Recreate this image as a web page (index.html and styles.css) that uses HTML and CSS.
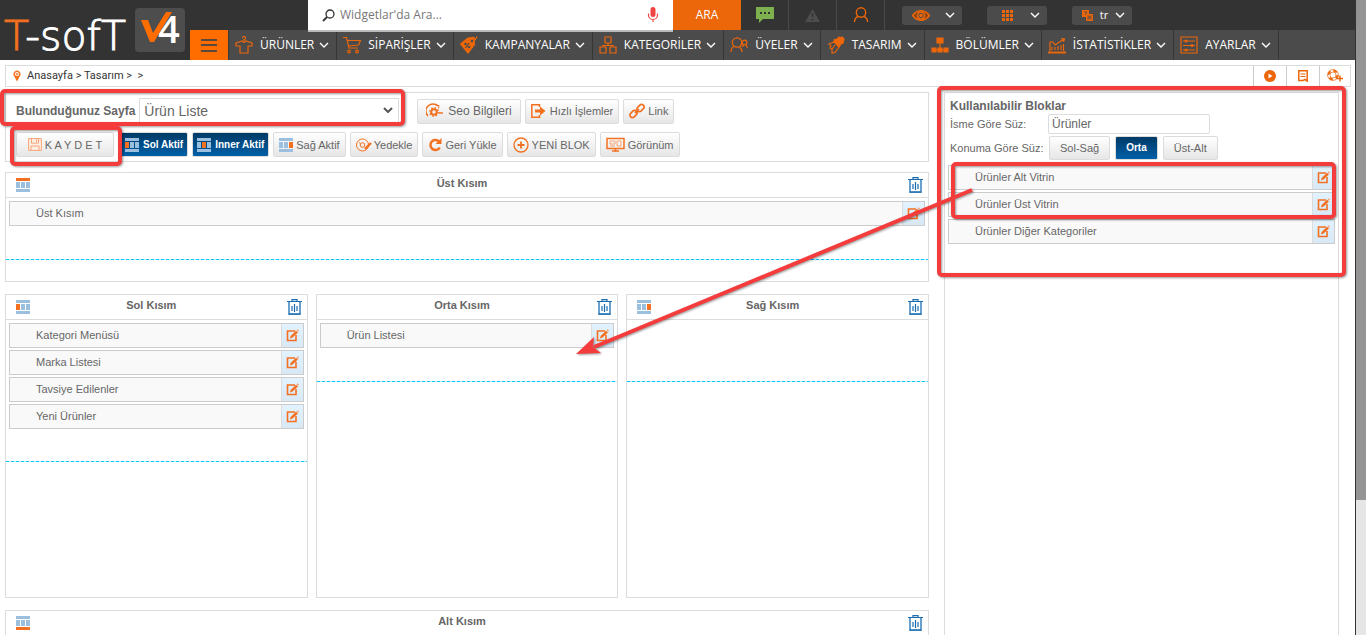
FILE: index.html
```html
<!DOCTYPE html>
<html lang="tr">
<head>
<meta charset="utf-8">
<title>T-Soft Tasarım</title>
<link rel="stylesheet" href="styles.css">
</head>
<body>
<svg class="defs" aria-hidden="true">
  <symbol id="chev" viewBox="0 0 10 6"><path d="M1 1l4 4 4-4" fill="none" stroke="currentColor" stroke-width="1.4"/></symbol>
  <symbol id="edit" viewBox="0 0 13 13"><path d="M9 2H1.500v9.500H10V6" fill="none" stroke="#f47021" stroke-width="1.600"/><path d="M4 9.500l.6-2.600L10 1.800l2 1.600-5.400 5.200z" fill="#f47021"/><path d="M11 .8l1.600 1.400" stroke="#f7a575" stroke-width="1.500"/></symbol>
  <symbol id="trash" viewBox="0 0 15 16"><path d="M0 2.500h15M5 2V.6h5V2" fill="none" stroke="#1a6cb0" stroke-width="1.200"/><path d="M2 3v12h11V3" fill="none" stroke="#4f90c6" stroke-width="1.700"/><path d="M1.500 15.200h12M5 7v5M7.500 5v8M10 7v5" stroke="#1a6cb0" stroke-width="1.200"/></symbol>
  <symbol id="top" viewBox="0 0 14 14"><path d="M0 0h14v3H0z" fill="#f47021"/><path d="M0 4h4v6H0zM5 4h4v6H5zM10 4h4v6h-4zM0 11h14v3H0z" fill="#9bc0df"/></symbol>
  <symbol id="bottom" viewBox="0 0 14 14"><path d="M0 0h14v3H0zM0 4h4v6H0zM5 4h4v6H5zM10 4h4v6h-4z" fill="#9bc0df"/><path d="M0 11h14v3H0z" fill="#f47021"/></symbol>
  <symbol id="left" viewBox="0 0 14 14"><path d="M0 0h14v3H0zM5 4h4v6H5zM10 4h4v6h-4zM0 11h14v3H0z" fill="#9bc0df"/><path d="M0 4h4v6H0z" fill="#f47021"/></symbol>
  <symbol id="mid" viewBox="0 0 14 14"><path d="M0 0h14v3H0zM0 4h4v6H0zM10 4h4v6h-4zM0 11h14v3H0z" fill="#9bc0df"/><path d="M5 4h4v6H5z" fill="#f47021"/></symbol>
  <symbol id="right" viewBox="0 0 14 14"><path d="M0 0h14v3H0zM0 4h4v6H0zM5 4h4v6H5zM0 11h14v3H0z" fill="#9bc0df"/><path d="M10 4h4v6h-4z" fill="#f47021"/></symbol>
</svg>
<div class="page">
  <header class="header">
    <a class="brand" href="#" aria-label="T-Soft V4">
      <svg width="190" height="60" viewBox="0 0 190 60">
        <text x="4" y="50" class="logo-text"><tspan class="logo-accent">T</tspan>-sofT</text>
        <rect x="135" y="8" width="50" height="44" rx="4" fill="#4d4d4d"/>
        <text x="158" y="43" class="logo-four">4</text>
        <path d="M141 20h7l5 13 13-21h6l-18 30h-4z" fill="#ff6c00"/>
      </svg>
    </a>
    <div class="topbar">
      <form class="search">
        <svg width="13" height="13" viewBox="0 0 13 13"><circle cx="8" cy="5" r="4" fill="none" stroke="#333" stroke-width="1.300"/><path d="M5 8l-4 4" stroke="#333" stroke-width="1.800"/></svg>
        <input class="search-input" type="text" placeholder="Widgetlar'da Ara..." aria-label="Widgetlar'da Ara">
        <svg width="12" height="16" viewBox="0 0 12 16"><rect x="3.500" y="0" width="5" height="10" rx="2.500" fill="#f04444"/><path d="M1.500 6.500v1.500a4.500 4.500 0 0 0 9 0V6.500M6 12v3" fill="none" stroke="#f04444" stroke-width="1.200"/></svg>
      </form>
      <button class="ara" type="button">ARA</button>
      <a class="tile" href="#" aria-label="Mesajlar"><svg width="18" height="16" viewBox="0 0 18 16"><path d="M0 0h18v12H7l-4 4v-4H0z" fill="#7fb04f"/><path d="M4 5h2v2H4zM8 5h2v2H8zM12 5h2v2h-2z" fill="#333"/></svg></a>
      <a class="tile" href="#" aria-label="Uyarılar"><svg width="15" height="13" viewBox="0 0 15 13"><path d="M7.500 0L15 13H0z" fill="#4d4d4d"/><path d="M7.500 4v4M7.500 10v1.500" stroke="#333" stroke-width="1.500"/></svg></a>
      <a class="tile" href="#" aria-label="Hesap"><svg width="16" height="16" viewBox="0 0 16 16" fill="none" stroke="#ec660a" stroke-width="1.400"><circle cx="8" cy="5.500" r="4.700"/><path d="M1.500 15c0-3 1.500-5 4-5.700M14.500 15c0-3-1.500-5-4-5.700"/></svg></a>
      <div class="quick">
        <button class="pill" type="button" aria-label="Görünüm seç"><svg width="18" height="11" viewBox="0 0 18 11"><path d="M.7 5.500C5-.8 13-.8 17.300 5.500 13 11.800 5 11.800.7 5.500z" fill="#8a430f" stroke="#ec660a" stroke-width="1.600"/><circle cx="9" cy="5.500" r="4.300" fill="#ec660a"/><circle cx="9" cy="5.500" r="2.300" fill="none" stroke="#4b4b4b"/></svg><svg width="10" height="6"><use href="#chev"/></svg></button>
        <button class="pill" type="button" aria-label="Uygulamalar"><svg width="11" height="11" viewBox="0 0 11 11"><path d="M0 0h3v3H0zM4 0h3v3H4zM8 0h3v3H8zM0 4h3v3H0zM4 4h3v3H4zM8 4h3v3H8zM0 8h3v3H0zM4 8h3v3H4zM8 8h3v3H8z" fill="#ec660a"/></svg><svg width="10" height="6"><use href="#chev"/></svg></button>
        <button class="pill pill-lang" type="button"><svg width="11" height="11" viewBox="0 0 11 11"><path d="M0 0h7v7H0z" fill="#ec660a"/><path d="M4.500 4.500h6v6h-6z" fill="#c35d1a" stroke="#ec660a"/><path d="M2 2h3L3 5M6 9l1.500-3L9 9" fill="none" stroke="#4b4b4b" stroke-width=".8"/></svg>tr<svg width="10" height="6"><use href="#chev"/></svg></button>
      </div>
    </div>
    <nav class="nav">
      <button class="burger" type="button" aria-label="Menü"><svg width="16" height="13" viewBox="0 0 16 13"><path d="M0 1h16M0 6h16M0 12h16" stroke="#5a4a3c" stroke-width="2"/></svg></button>
      <a class="nav-item" href="#"><svg class="ni" viewBox="0 0 18 18"><path d="M9 5V3.500a1.500 1.500 0 1 0-1.500-1.500M7 5L1 7v3h4v7h8v-7h4V7l-6-2-2 1.500z"/></svg>ÜRÜNLER<svg class="nc"><use href="#chev"/></svg></a>
      <a class="nav-item" href="#"><svg class="ni" viewBox="0 0 18 18"><path d="M0 1.500h3.500L6 12h9M4.500 4.500h13L15.500 9 5.500 10"/><circle cx="6" cy="15.500" r="1.300"/><circle cx="14" cy="15.500" r="1.300"/></svg>SİPARİŞLER<svg class="nc"><use href="#chev"/></svg></a>
      <a class="nav-item" href="#"><svg class="ni" viewBox="0 0 18 18"><path class="solid" d="M.5 8L8 2l6-.5.500 7L8 17z"/><path d="M12 5c2 0 4-2 5-4.500"/><circle class="cut" cx="12" cy="5" r=".7"/><path class="cut" d="M5.500 12L9 7"/><circle class="cut" cx="5.500" cy="8" r=".6"/><circle class="cut" cx="9" cy="11" r=".6"/></svg>KAMPANYALAR<svg class="nc"><use href="#chev"/></svg></a>
      <a class="nav-item" href="#"><svg class="ni" viewBox="0 0 18 18"><path d="M6 1h6v6H6zM1 11h6v6H1zM11 11h6v6h-6zM9 7v2.500M4 11V9.500h10V11"/></svg>KATEGORİLER<svg class="nc"><use href="#chev"/></svg></a>
      <a class="nav-item" href="#"><svg class="ni" viewBox="0 0 18 18"><circle cx="7" cy="6.500" r="4.700"/><path d="M1 16c0-3 1-5 3.500-6M12 16c0-3-1-4-2.500-5.500"/><circle cx="14.500" cy="6.500" r="2.300"/><path d="M12.500 11l1-2.200M17.500 12l-1.500-3.300"/></svg>ÜYELER<svg class="nc"><use href="#chev"/></svg></a>
      <a class="nav-item" href="#"><svg class="ni" viewBox="0 0 18 18"><path class="solid" d="M7 6l5 5 2-3 2-1 1-4-2-2-2 1-1-1-2 2-3 1z"/><path d="M7 6L2 8l2 2-1 2 2 1v4l3-.500L12 11M5 13l3-4"/></svg>TASARIM<svg class="nc"><use href="#chev"/></svg></a>
      <a class="nav-item" href="#"><svg class="ni" viewBox="0 0 18 18"><path class="solid" d="M6 2h6v5H6zM1 12h4v4H1zM7 12h4v4H7zM13 12h4v4h-4zM9 7v5M3 14h12"/></svg>BÖLÜMLER<svg class="nc"><use href="#chev"/></svg></a>
      <a class="nav-item" href="#"><svg class="ni" viewBox="0 0 18 18"><path d="M2 15V6h3l2 3 3-2 6-4M13 2.500l3.500.5-1 3M15.500 8v7M4 14v-3M7 14v-3M10 14v-4M13 14V9"/><path d="M0 16h18M0 17h18"/></svg>İSTATİSTİKLER<svg class="nc"><use href="#chev"/></svg></a>
      <a class="nav-item" href="#"><svg class="ni" viewBox="0 0 18 18"><path d="M1 1h16v16H1zM3 5h12M3 9.500h12M3 14h12"/><circle cx="6" cy="5" r="1"/><circle cx="12" cy="9.500" r="1"/><circle cx="6" cy="14" r="1"/></svg>AYARLAR<svg class="nc"><use href="#chev"/></svg></a>
    </nav>
  </header>

  <div class="crumbs">
    <svg width="8" height="12" viewBox="0 0 8 12"><path d="M4 11.500L1 6a3.500 3.500 0 1 1 6 0z" fill="#f47021"/><circle cx="4" cy="4" r="2" fill="#fff"/><circle cx="4" cy="4" r="1" fill="#f47021"/></svg>
    <div class="crumb-path"><a href="#">Anasayfa</a> &gt; <a href="#">Tasarım</a> &gt; &nbsp;&gt;</div>
    <button class="crumb-btn" type="button" aria-label="Oynat"><svg width="12" height="12" viewBox="0 0 12 12"><circle cx="6" cy="6" r="6" fill="#ec660a"/><path d="M4.500 3.500L8.500 6l-4 2.500z" fill="#fff"/></svg></button>
    <button class="crumb-btn" type="button" aria-label="Notlar"><svg width="10" height="12" viewBox="0 0 10 12"><path d="M.8.8h8.400v10.400L7 9.500l-2 1H.8z" fill="none" stroke="#ec660a" stroke-width="1.500"/><path d="M2.500 4h5M2.500 6.500h5" stroke="#ec660a"/></svg></button>
    <button class="crumb-btn" type="button" aria-label="Destek"><svg width="16" height="14" viewBox="0 0 16 14"><circle cx="6" cy="6" r="4.500" fill="none" stroke="#ec660a" stroke-width="2" stroke-dasharray="4 3"/><circle cx="6" cy="6" r="5.400" fill="none" stroke="#ec660a" stroke-width=".7"/><circle cx="6" cy="6" r="3" fill="none" stroke="#ec660a" stroke-width=".7"/><path d="M13 6.500v6M10 9.500h6" stroke="#ec660a" stroke-width="1.400"/></svg></button>
  </div>

  <div class="workspace">
    <main class="main">
      <section class="toolbar">
        <div class="tool-row">
          <label class="page-label" for="sayfa">Bulunduğunuz Sayfa</label>
          <div class="select-wrap">
            <select class="page-select" id="sayfa"><option>Ürün Liste</option></select>
            <svg class="select-arrow" viewBox="0 0 10 6"><path d="M1 1l4 4 4-4" fill="none" stroke="#555" stroke-width="2"/></svg>
          </div>
          <button class="btn btn-seo" type="button"><svg width="17" height="16" viewBox="0 0 17 16" fill="none" stroke="#f47021"><path d="M2 13A7 7 0 0 1 12 3" stroke-width="1.400"/><path d="M9.500 2l3.500.5-.500 3" /><circle cx="8" cy="9" r="2.800" stroke-width="2"/><circle cx="8" cy="9" r="4.200" stroke-width="1.500" stroke-dasharray="1.500 1.800"/><path d="M13 10h4" stroke-width="1.500"/></svg>Seo Bilgileri</button>
          <button class="btn btn-wide" type="button"><svg width="15" height="14" viewBox="0 0 15 14"><path d="M8.500 3V.8H.8v12.400h7.700V11" fill="none" stroke="#f47021" stroke-width="1.500"/><path d="M4 5.500h5V2.500L14.500 7 9 11.500v-3H4z" fill="#f47021"/></svg>Hızlı İşlemler</button>
          <button class="btn" type="button"><svg width="16" height="16" viewBox="0 0 16 16" fill="none" stroke="#f47021" stroke-width="1.700"><rect x="7.500" y="2.500" width="8" height="5" rx="2.500" transform="rotate(-45 11.500 5)"/><rect x=".5" y="8.500" width="8" height="5" rx="2.500" transform="rotate(-45 4.500 11)"/><path d="M6 10l4-4"/></svg>Link</button>
        </div>
        <div class="tool-row">
          <button class="btn btn-save" type="button"><svg width="14" height="13" viewBox="0 0 14 13"><path d="M.6.6h12.800v11.800H.6z" fill="#fdeee5" stroke="#f8a476"/><path d="M3.500.6v4.500h7V.6M8.500 1.500v2.500M3 12V8h8v4" fill="none" stroke="#f8a476"/></svg>K A Y D E T</button>
          <button class="btn btn-on" type="button"><svg width="14" height="14"><use href="#left"/></svg>Sol Aktif</button>
          <button class="btn btn-on" type="button"><svg width="14" height="14"><use href="#mid"/></svg>Inner Aktif</button>
          <button class="btn" type="button"><svg width="14" height="14"><use href="#right"/></svg>Sağ Aktif</button>
          <button class="btn btn-tight" type="button"><svg width="16" height="14" viewBox="0 0 16 14" fill="none" stroke="#f47021"><circle cx="6.500" cy="7" r="6"/><circle cx="6.500" cy="7" r="2.300"/><path d="M9 11l6-6" stroke-width="2.400"/><path d="M3 4.500l1.500 1.200"/></svg>Yedekle</button>
          <button class="btn" type="button"><svg width="14" height="14" viewBox="0 0 14 14"><path d="M11.800 9.500A5 5 0 1 1 11 3.500" fill="none" stroke="#f47021" stroke-width="2.500"/><path d="M13.500 0v6H7.500z" fill="#f47021"/></svg>Geri Yükle</button>
          <button class="btn" type="button"><svg width="16" height="16" viewBox="0 0 16 16" fill="none" stroke="#f47021"><circle cx="8" cy="8" r="7" stroke-width="1.300"/><path d="M8 4.500v7M4.500 8h7" stroke-width="1.800"/></svg>YENİ BLOK</button>
          <button class="btn" type="button"><svg width="19" height="15" viewBox="0 0 19 15" fill="none" stroke="#f47021"><path d="M1 1.500h17v10H1z" stroke-width="1.500"/><path d="M4 4h5v3H4zM11 4h4v5h-4zM4 9h5" stroke="#f8a476"/><path d="M6 14h7M9.500 11.500V14" stroke-width="1.500"/></svg>Görünüm</button>
        </div>
      </section>

      <section class="zone zone-top">
        <div class="zone-head"><svg width="14" height="14"><use href="#top"/></svg><h2 class="zone-title">Üst Kısım</h2><button class="icon-btn" type="button" aria-label="Sil"><svg width="15" height="16"><use href="#trash"/></svg></button></div>
        <div class="zone-list">
          <div class="block"><span class="block-name">Üst Kısım</span><button class="block-edit" type="button" aria-label="Düzenle"><svg width="13" height="13"><use href="#edit"/></svg></button></div>
        </div>
      </section>

      <div class="columns">
        <section class="zone">
          <div class="zone-head"><svg width="14" height="14"><use href="#left"/></svg><h2 class="zone-title">Sol Kısım</h2><button class="icon-btn" type="button" aria-label="Sil"><svg width="15" height="16"><use href="#trash"/></svg></button></div>
          <div class="zone-list">
            <div class="block"><span class="block-name">Kategori Menüsü</span><button class="block-edit" type="button" aria-label="Düzenle"><svg width="13" height="13"><use href="#edit"/></svg></button></div>
            <div class="block"><span class="block-name">Marka Listesi</span><button class="block-edit" type="button" aria-label="Düzenle"><svg width="13" height="13"><use href="#edit"/></svg></button></div>
            <div class="block"><span class="block-name">Tavsiye Edilenler</span><button class="block-edit" type="button" aria-label="Düzenle"><svg width="13" height="13"><use href="#edit"/></svg></button></div>
            <div class="block"><span class="block-name">Yeni Ürünler</span><button class="block-edit" type="button" aria-label="Düzenle"><svg width="13" height="13"><use href="#edit"/></svg></button></div>
          </div>
        </section>
        <section class="zone">
          <div class="zone-head"><svg width="14" height="14"></svg><h2 class="zone-title">Orta Kısım</h2><button class="icon-btn" type="button" aria-label="Sil"><svg width="15" height="16"><use href="#trash"/></svg></button></div>
          <div class="zone-list">
            <div class="block"><span class="block-name">Ürün Listesi</span><button class="block-edit" type="button" aria-label="Düzenle"><svg width="13" height="13"><use href="#edit"/></svg></button></div>
          </div>
        </section>
        <section class="zone">
          <div class="zone-head"><svg width="14" height="14"><use href="#right"/></svg><h2 class="zone-title">Sağ Kısım</h2><button class="icon-btn" type="button" aria-label="Sil"><svg width="15" height="16"><use href="#trash"/></svg></button></div>
          <div class="zone-list"></div>
        </section>
      </div>

      <section class="zone zone-bottom">
        <div class="zone-head"><svg width="14" height="14"><use href="#bottom"/></svg><h2 class="zone-title">Alt Kısım</h2><button class="icon-btn" type="button" aria-label="Sil"><svg width="15" height="16"><use href="#trash"/></svg></button></div>
      </section>
    </main>

    <aside class="side">
      <h2 class="side-title">Kullanılabilir Bloklar</h2>
      <div class="filter">
        <label class="filter-label" for="isim">İsme Göre Süz:</label>
        <input class="filter-input" id="isim" type="text" value="Ürünler">
      </div>
      <div class="filter filter-place">
        <span class="filter-label">Konuma Göre Süz:</span>
        <button class="btn btn-place" type="button">Sol-Sağ</button>
        <button class="btn btn-place btn-on" type="button">Orta</button>
        <button class="btn btn-place" type="button">Üst-Alt</button>
      </div>
      <div class="side-list">
        <div class="block"><span class="block-name">Ürünler Alt Vitrin</span><button class="block-edit" type="button" aria-label="Düzenle"><svg width="13" height="13"><use href="#edit"/></svg></button></div>
        <div class="block"><span class="block-name">Ürünler Üst Vitrin</span><button class="block-edit" type="button" aria-label="Düzenle"><svg width="13" height="13"><use href="#edit"/></svg></button></div>
        <div class="block"><span class="block-name">Ürünler Diğer Kategoriler</span><button class="block-edit" type="button" aria-label="Düzenle"><svg width="13" height="13"><use href="#edit"/></svg></button></div>
      </div>
    </aside>
  </div>
</div>
<div class="scrollbar"><div class="thumb"></div></div>

<svg class="marks" width="1356" height="300" viewBox="0 0 1356 300" aria-hidden="true">
  <g fill="none" stroke="#f43c3c" stroke-width="4">
    <rect x="2" y="91" width="401" height="33" rx="3"/>
    <rect x="12" y="128" width="108" height="36" rx="3"/>
    <rect x="939" y="88" width="405" height="187" rx="3"/>
    <rect x="953" y="164" width="381" height="53" rx="3"/>
    <path d="M972 190L594 347"/>
  </g>
  <path d="M576 354l18-17-1 10 8 6z" fill="#f43c3c"/>
</svg>
</body>
</html>
```
FILE: styles.css
```css
* { box-sizing: border-box; }
body {
  margin: 0;
  height: 100vh;
  overflow: hidden;
  display: flex;
  position: relative;
  background: #fff;
  color: #666;
  font: 11px/14px "Liberation Sans", Arial, sans-serif;
}
button { font: inherit; color: inherit; margin: 0; padding: 0; border: 0; background: none; }
a { color: inherit; text-decoration: none; }
svg { display: block; flex: none; }
h2 { margin: 0; }
.defs { position: absolute; width: 0; height: 0; }

.page { flex: 1; min-width: 0; display: flex; flex-direction: column; border-right: 1px solid #333; }
.scrollbar { width: 10px; background: #e6e6e6; }
.thumb { height: 500px; background: #949494; }
.marks { position: absolute; left: 0; top: 0; pointer-events: none; overflow: visible; filter: drop-shadow(1px 1px 1px rgba(0, 0, 0, .4)); }

.header {
  flex: none;
  display: grid;
  grid-template-columns: 190px 1fr;
  grid-template-rows: 30px 30px;
  background: #333;
  color: #fff;
  font-family: "Open Sans", "Noto Sans", sans-serif;
}
.brand { grid-row: 1 / 3; }
.logo-text { font: 200 41px "DejaVu Sans", sans-serif; fill: #fff; stroke: #fff; stroke-width: 1px; }
.logo-accent { fill: #f47021; stroke: #f47021; }
.logo-four { font: 600 38px "Open Sans", sans-serif; fill: #fff; }

.topbar { display: flex; padding-left: 118px; }
.search {
  flex: 0 1 365px;
  height: 32px;
  display: flex;
  align-items: center;
  gap: 5px;
  padding: 0 14px;
  background: #fff;
  border-bottom: 2px solid #bbb;
  position: relative;
}
.search-input { flex: 1; min-width: 0; border: 0; padding: 0; outline: 0; background: none; font: 12px/20px "Open Sans", sans-serif; color: #555; }
.search-input::placeholder { color: #777; opacity: 1; }
.ara { width: 68px; background: #ec660a; font-size: 12px; }
.tile { width: 48px; display: flex; align-items: center; justify-content: center; border-right: 1px solid #4a4a4a; }
.quick { display: flex; align-items: center; gap: 25px; padding-left: 17px; }
.pill { width: 60px; height: 19px; display: flex; align-items: center; justify-content: space-between; padding: 0 7px 0 10px; border-radius: 3px; background: #4b4b4b; font-size: 11px; }
.pill:nth-child(2) { padding-left: 15px; }

.nav { display: flex; background: #4b4b4b; }
.burger { width: 39px; display: flex; align-items: center; justify-content: center; background: #ff6c00; border-right: 1px solid #3a3a3a; }
.nav-item { display: flex; align-items: center; gap: 5px; padding: 0 7px 0 6px; border-right: 1px solid #363636; font-size: 12px; white-space: nowrap; }
.ni { width: 18px; height: 18px; margin-right: 2px; fill: none; stroke: #ec660a; stroke-width: 1.2; }
.ni .solid { fill: #ec660a; }
.ni .cut { stroke: #4b4b4b; }
.nc { width: 10px; height: 6px; }

.crumbs {
  flex: none;
  display: flex;
  align-items: center;
  height: 22px;
  margin: 5px 4px 5px 5px;
  padding-left: 7px;
  border: 1px solid #dcdcdc;
  color: #333;
  font-family: Roboto, sans-serif;
}
.crumb-path { flex: 1; padding-left: 6px; }
.crumb-btn { width: 33px; height: 20px; display: flex; align-items: center; justify-content: center; border-left: 1px solid #ccc; }
.crumb-btn:last-child { width: 31px; }

.workspace { flex: 1; display: grid; grid-template-columns: 1fr 395px; gap: 15px; padding: 0 16px 0 5px; }
.main { min-width: 0; }
.toolbar { display: flex; flex-direction: column; gap: 8px; padding: 5px 10px 4px; border: 1px solid #dcdcdc; margin-bottom: 10px; }
.tool-row { display: flex; align-items: center; gap: 4px; white-space: nowrap; }
.page-label { font-size: 12px; font-weight: 700; }
.select-wrap { position: relative; width: 260px; margin-right: 14px; }
.page-select { width: 100%; height: 26px; display: block; appearance: none; padding: 0 4px; border: 1px solid #dcdcdc; background: #fff; color: #666; font: 14px/20px "Liberation Sans", sans-serif; }
.select-arrow { position: absolute; right: 6px; top: 9px; width: 10px; height: 6px; }

.btn {
  height: 25px;
  display: flex;
  align-items: center;
  justify-content: center;
  gap: 3px;
  padding: 0 5px;
  border: 1px solid #dcdcdc;
  border-radius: 2px;
  background: linear-gradient(#fff, #e6e6e6);
}
.btn-seo { padding: 0 8px; gap: 5px; font-size: 12px; }
.btn-wide { gap: 4px; }
.btn-tight { gap: 2px; }
.btn-save { width: 98px; margin-right: 2px; }
.btn-on { background: linear-gradient(#003a66, #0060a8); color: #fff; font-size: 10px; font-weight: 700; padding: 0 4px; gap: 4px; }

.zone { border: 1px solid #dcdcdc; }
.zone-head { height: 25px; display: flex; align-items: center; padding: 0 4px 0 10px; border-bottom: 1px solid #dcdcdc; }
.zone-title { flex: 1; font-size: 11px; line-height: 14px; text-align: center; padding: 0 13px 4px 0; }
.icon-btn { padding: 0 1px; }
.zone-list {
  min-height: 62px;
  display: flex;
  flex-direction: column;
  gap: 2px;
  padding: 3px 3px 33px;
  background: repeating-linear-gradient(90deg, #00c4ff 0 3px, #b8eeff 3px 5px) bottom / 100% 1px no-repeat;
}
.zone-top { padding-bottom: 21px; margin-bottom: 12px; }
.zone-bottom { padding-bottom: 80px; }
.columns { display: grid; grid-template-columns: repeat(3, 1fr); gap: 8px; min-height: 304px; margin-bottom: 12px; }
.block { display: flex; height: 25px; border: 1px solid #ccc; background: #f9f9f9; }
.block-name { flex: 1; padding-left: 26px; line-height: 22px; }
.block-edit { width: 22px; display: flex; align-items: center; justify-content: center; border-left: 1px solid #dcdcdc; background: linear-gradient(#e2f2ff, #d8e9f5); }

.side { border: 1px solid #dcdcdc; border-bottom: 0; padding: 6px 3px 0; }
.side-title { font-size: 12px; line-height: 15px; padding-left: 2px; }
.filter { display: flex; align-items: center; padding-left: 2px; }
.filter-label { width: 98px; }
.filter-input { width: 162px; height: 20px; padding: 0 3px; border: 1px solid #dcdcdc; border-radius: 2px; color: #666; font: 12px/16px "Liberation Sans", sans-serif; }
.filter-place { gap: 5px; padding-top: 2px; }
.filter-place .filter-label { width: 94px; }
.btn-place { height: 24px; padding: 0 10px; }
.side-list { display: flex; flex-direction: column; gap: 2px; padding-top: 5px; }
```
